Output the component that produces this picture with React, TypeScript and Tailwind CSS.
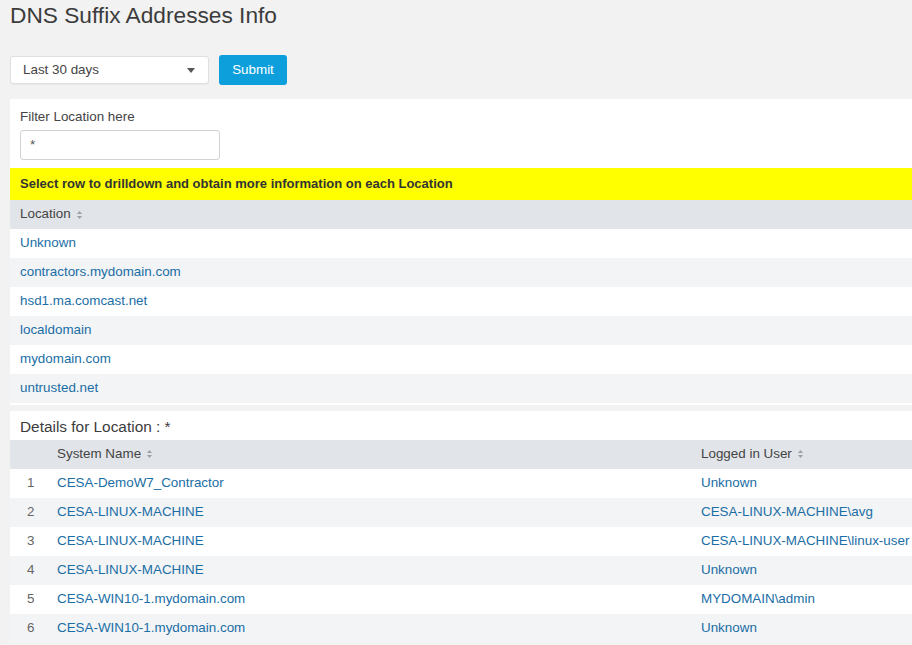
import React from "react";

const font = { fontFamily: '"Liberation Sans", Arial, sans-serif' };

function SortIcon() {
  return (
    <svg width="7" height="10" viewBox="0 0 7 10" className="ml-[5px] inline-block">
      <path d="M3.5 1 L6 4 L1 4 Z" fill="#9aa0a6" />
      <path d="M3.5 9 L6 6 L1 6 Z" fill="#9aa0a6" />
    </svg>
  );
}

const locations = [
  "Unknown",
  "contractors.mydomain.com",
  "hsd1.ma.comcast.net",
  "localdomain",
  "mydomain.com",
  "untrusted.net",
];

const details = [
  ["CESA-DemoW7_Contractor", "Unknown"],
  ["CESA-LINUX-MACHINE", "CESA-LINUX-MACHINE\\avg"],
  ["CESA-LINUX-MACHINE", "CESA-LINUX-MACHINE\\linux-user"],
  ["CESA-LINUX-MACHINE", "Unknown"],
  ["CESA-WIN10-1.mydomain.com", "MYDOMAIN\\admin"],
  ["CESA-WIN10-1.mydomain.com", "Unknown"],
];

export default function App() {
  return (
    <div className="min-h-[645px] w-[912px] overflow-hidden bg-[#f2f2f2] text-[13.4px] text-[#333]" style={font}>
      <div className="pl-[10px] pt-[1px] h-[30px] text-[22.7px] leading-[28px] text-[#3c3c3c]">DNS Suffix Addresses Info</div>
      <div className="flex items-center gap-[10px] pl-[10px] mt-[25px] h-[30px]">
        <div className="flex h-[28px] w-[199px] items-center justify-between rounded-[3px] border border-[#e0e0e0] bg-white pl-[12px] pr-[13px] shadow-[0_1px_1px_rgba(0,0,0,0.04)]">
          <span className="text-[#444]">Last 30 days</span>
          <svg width="8" height="5" viewBox="0 0 8 5"><path d="M0 0 L8 0 L4 5 Z" fill="#555" /></svg>
        </div>
        <button className="h-[30px] w-[68px] rounded-[3px] bg-[#0c9fdc] text-[13.4px] text-white">Submit</button>
      </div>

      <div className="ml-[10px] mt-[14px] bg-white pb-[2px]">
        <div className="pl-[10px] pt-[9px] leading-[18px] text-[#444]">Filter Location here</div>
        <div className="ml-[10px] mt-[4px] flex h-[30px] w-[200px] items-center rounded-[3px] border border-[#d3d3d3] pl-[9px] text-[#555]">
          *
        </div>
        <div className="mt-[8px] flex h-[32px] items-center bg-[#ffff00] pl-[10px] text-[13px] font-bold text-[#333]">
          Select row to drilldown and obtain more information on each Location
        </div>
        <div className="flex h-[29px] items-center bg-[#e1e4e9] pl-[10px] text-[#444]">
          Location<SortIcon />
        </div>
        {locations.map((l, i) => (
          <div key={l} className={`flex h-[29px] items-center pl-[10px] text-[#1a6ea5] ${i % 2 === 1 ? "bg-[#f3f4f6]" : "bg-white"}`}>
            {l}
          </div>
        ))}
      </div>

      <div className="ml-[10px] mt-[6px] bg-white">
        <div className="flex h-[29px] items-center pl-[10px] pt-[2px] text-[15.4px] text-[#3c3c3c]">Details for Location : *</div>
        <div className="flex h-[29px] items-center bg-[#e1e4e9] text-[#444]">
          <div className="w-[47px]" />
          <div className="flex w-[644px] items-center">System Name<SortIcon /></div>
          <div className="flex items-center">Logged in User<SortIcon /></div>
        </div>
        {details.map((d, i) => (
          <div key={i} className={`flex h-[29px] items-center ${i % 2 === 1 ? "bg-[#f3f4f6]" : "bg-white"}`}>
            <div className="w-[47px] pl-[17px] text-[#666]">{i + 1}</div>
            <div className="w-[644px] text-[#1a6ea5]">{d[0]}</div>
            <div className="whitespace-nowrap text-[#1a6ea5]">{d[1]}</div>
          </div>
        ))}
      </div>
    </div>
  );
}
